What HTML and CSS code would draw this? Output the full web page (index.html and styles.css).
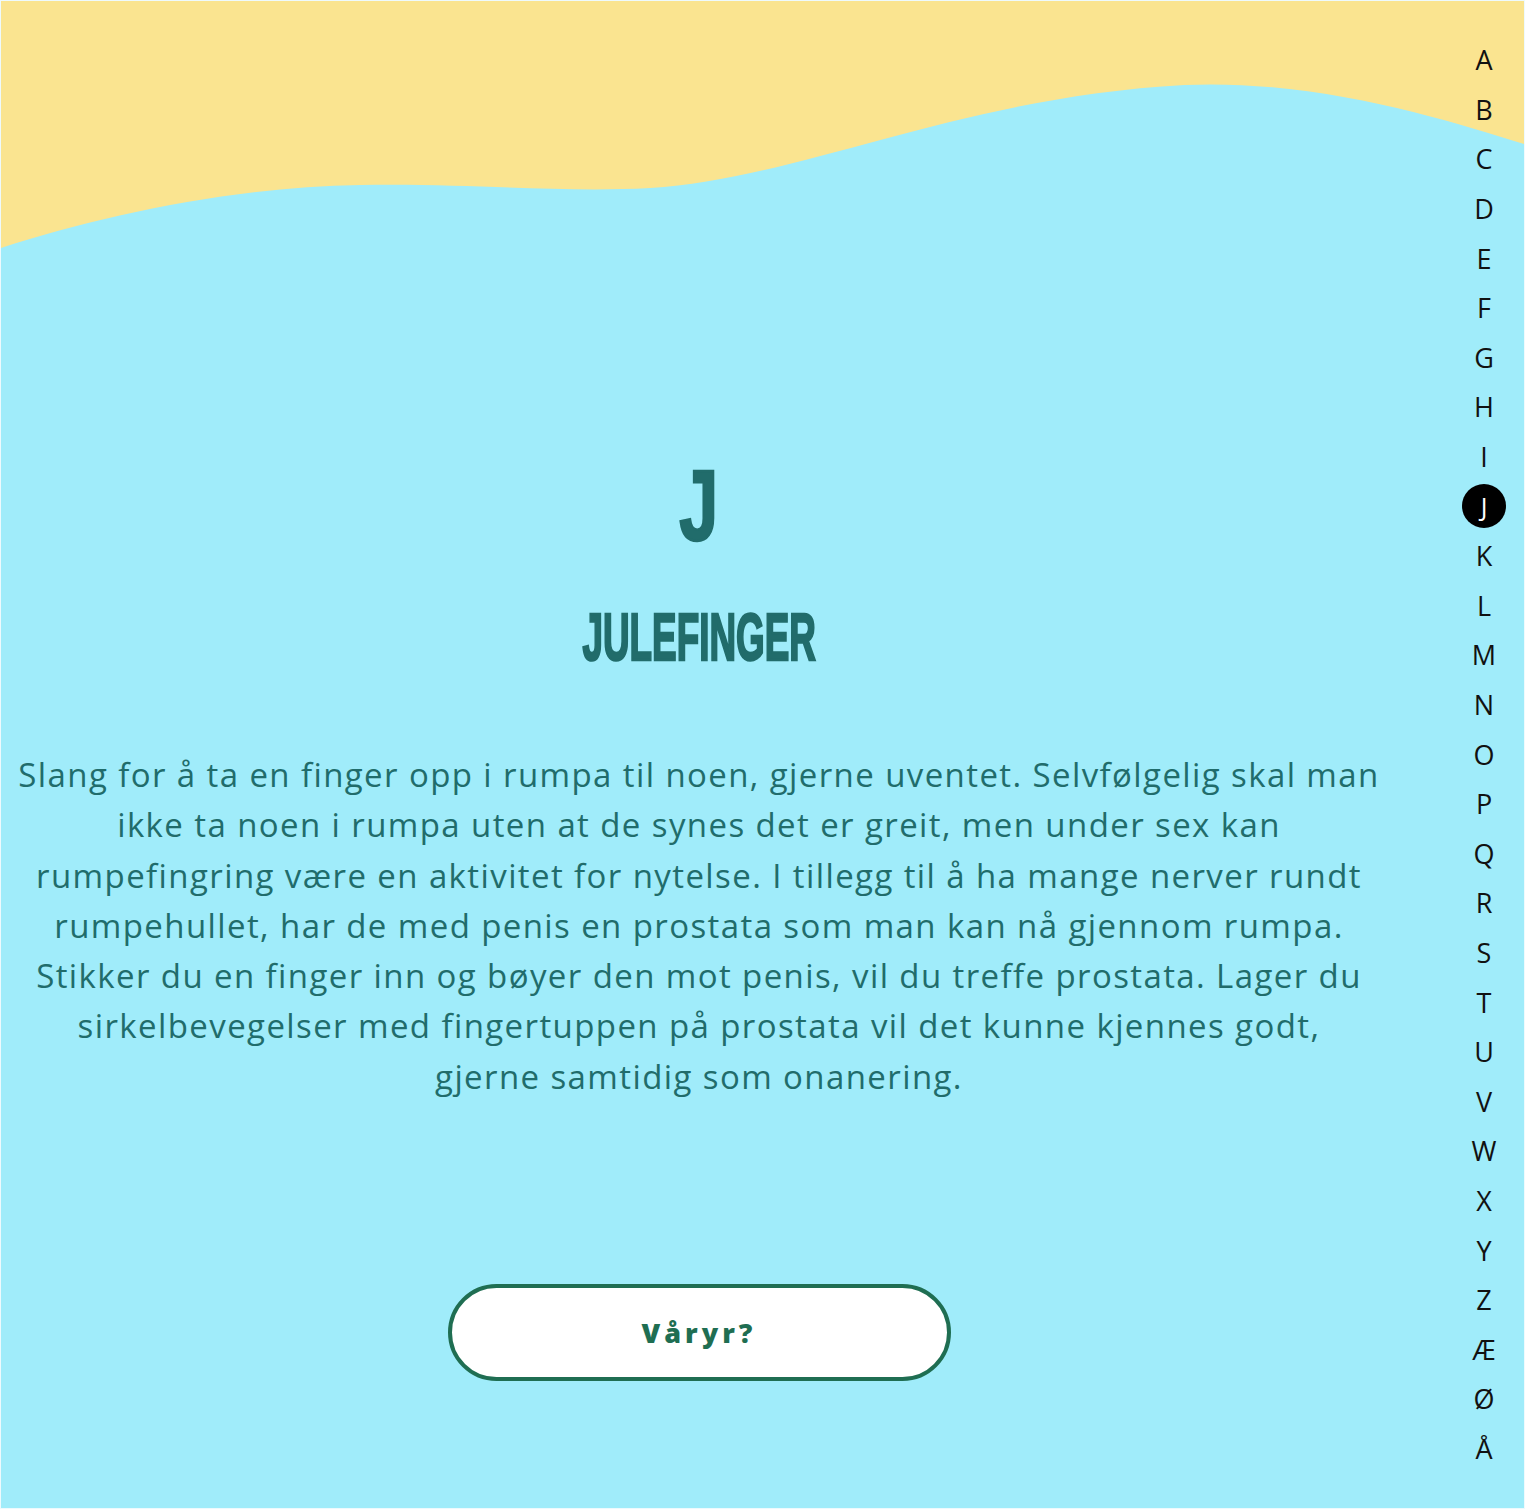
FILE: index.html
```html
<!DOCTYPE html>
<html lang="no">
<head>
<meta charset="utf-8">
<title>Julefinger</title>
<link rel="stylesheet" href="styles.css">
</head>
<body>
<div class="page">
  <svg class="wave" viewBox="0 0 1525 260" preserveAspectRatio="none" aria-hidden="true">
    <path d="M0 247 C100 215 230 186 360 184 C470 182 560 192 650 187 C800 178 960 96 1185 84 C1320 78 1450 120 1525 143 V0 H0 Z" fill="#FAE490"/>
  </svg>
  <main class="content">
    <div class="letter"><span class="cond">J</span></div>
    <h1 class="term"><span class="cond">JULEFINGER</span></h1>
    <p class="def">Slang for å ta en finger opp i rumpa til noen, gjerne uventet. Selvfølgelig skal man<br>ikke ta noen i rumpa uten at de synes det er greit, men under sex kan<br>rumpefingring være en aktivitet for nytelse. I tillegg til å ha mange nerver rundt<br>rumpehullet, har de med penis en prostata som man kan nå gjennom rumpa.<br>Stikker du en finger inn og bøyer den mot penis, vil du treffe prostata. Lager du<br>sirkelbevegelser med fingertuppen på prostata vil det kunne kjennes godt,<br>gjerne samtidig som onanering.</p>
    <a class="btn" href="#">Våryr?</a>
  </main>
  <nav class="alpha">
    <a href="#">A</a><a href="#">B</a><a href="#">C</a><a href="#">D</a><a href="#">E</a><a href="#">F</a><a href="#">G</a><a href="#">H</a><a href="#">I</a><a href="#" class="active"><span>J</span></a><a href="#">K</a><a href="#">L</a><a href="#">M</a><a href="#">N</a><a href="#">O</a><a href="#">P</a><a href="#">Q</a><a href="#">R</a><a href="#">S</a><a href="#">T</a><a href="#">U</a><a href="#">V</a><a href="#">W</a><a href="#">X</a><a href="#">Y</a><a href="#">Z</a><a href="#">Æ</a><a href="#">Ø</a><a href="#">Å</a>
  </nav>
</div>
</body>
</html>
```
FILE: styles.css
```css
* { box-sizing: border-box; }
html, body { margin: 0; padding: 0; }
body { background: #ffffff; }

.page {
  position: relative;
  width: 1525px;
  height: 1509px;
  background: #A0ECFA;
  display: grid;
  grid-template-columns: 1396px 129px;
  overflow: hidden;
  border: 1px solid #eefafd;
}

.wave {
  position: absolute;
  left: 0;
  top: 0;
  width: 100%;
  height: 260px;
  display: block;
}

.content {
  position: relative;
  display: flex;
  flex-direction: column;
  align-items: center;
  padding-top: 454px;
  color: #216C6B;
}

.cond {
  display: inline-block;
  transform: scaleX(0.55);
  transform-origin: center;
  -webkit-text-stroke: 2.5px currentColor;
}

.letter {
  font-family: "Liberation Sans", Arial, sans-serif;
  font-weight: 700;
  font-size: 100px;
  line-height: 100px;
}

.letter .cond { transform: scaleX(0.7); }

.term {
  margin: 48px 0 0;
  font-family: "Liberation Sans", Arial, sans-serif;
  font-weight: 700;
  font-size: 67px;
  line-height: 67px;
}

.def {
  margin: 80px 0 0;
  font-family: "Open Sans", sans-serif;
  font-size: 33px;
  line-height: 50.3px;
  letter-spacing: 1.4px;
  text-align: center;
  white-space: nowrap;
}

.btn {
  margin-top: 182px;
  width: 503px;
  height: 97px;
  border: 4px solid #1F6E52;
  border-radius: 49px;
  background: #ffffff;
  color: #1F6E52;
  display: flex;
  align-items: center;
  justify-content: center;
  font-family: "Open Sans", sans-serif;
  font-weight: 800;
  font-size: 27px;
  letter-spacing: 4px;
  text-decoration: none;
}

.alpha {
  position: relative;
  display: flex;
  flex-direction: column;
  padding-top: 34px;
  padding-left: 44px;
}

.alpha a {
  width: 86px;
  height: 49.6px;
  display: flex;
  align-items: center;
  justify-content: center;
  color: #111111;
  text-decoration: none;
  font-family: "Open Sans", sans-serif;
  font-size: 27px;
  font-weight: 400;
}

.alpha a.active span {
  width: 44px;
  height: 44px;
  border-radius: 50%;
  background: #000000;
  color: #ffffff;
  display: flex;
  align-items: center;
  justify-content: center;
  font-size: 25px;
}
```
